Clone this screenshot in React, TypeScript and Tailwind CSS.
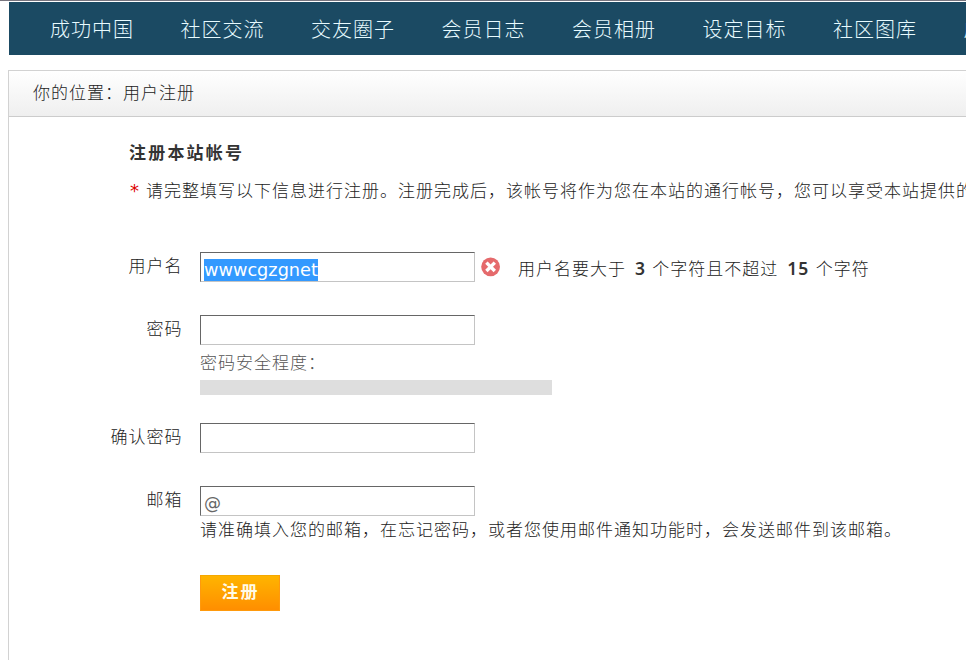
import type { ReactNode } from "react";

const NAV_ITEMS = [
  "成功中国",
  "社区交流",
  "交友圈子",
  "会员日志",
  "会员相册",
  "设定目标",
  "社区图库",
  "成功商城",
];

export default function App() {
  return (
    <div className="h-[660px] w-[966px] overflow-hidden border-t border-[#78757f] bg-white pt-px font-['DejaVu_Sans','Noto_Sans_CJK_SC',sans-serif] text-[17px] font-light tracking-[1px] text-[#222]">
      <NavBar />
      <main className="ml-2 mt-[15px] h-[620px] border-l border-t border-[#d2d2d2]">
        <div className="h-[46px] border-b border-[#ccc] bg-linear-to-b from-white to-[#efefef] pl-6 leading-[44px]">
          你的位置：用户注册
        </div>
        <RegisterForm />
      </main>
    </div>
  );
}

function NavBar() {
  return (
    <nav className="ml-[9px] flex h-[53px] gap-[46.5px] bg-[#1b4a63] pl-[41px] text-[20px] leading-[57px] text-[#e8fbff]">
      {NAV_ITEMS.map((item) => (
        <a key={item} href="#" className="shrink-0 whitespace-nowrap">
          {item}
        </a>
      ))}
    </nav>
  );
}

function RegisterForm() {
  return (
    <form className="pt-[22px]">
      <h1 className="pl-[120px] font-bold leading-[28px] tracking-[2.2px] text-[#333]">注册本站帐号</h1>
      <p className="mt-[10px] flex gap-[6px] whitespace-nowrap pl-[121px] leading-[28px]">
        <span className="w-[11px] text-[18px] font-normal text-[#d00]">*</span>
        请完整填写以下信息进行注册。注册完成后，该帐号将作为您在本站的通行帐号，您可以享受本站提供的
      </p>

      <div className="mt-[47px] flex flex-col">
        <Field label="用户名" className="h-[63px]">
          <div className="flex h-[30px] items-center">
            <TextBox>
              <span className="bg-[#3399ff] text-[17.7px] font-normal leading-[22px] tracking-normal text-white">
                wwwcgzgnet
              </span>
            </TextBox>
            <ErrorIcon />
            <span className="ml-[17px] whitespace-pre pt-[6px]">
              用户名要大于 <Digits>3</Digits> 个字符且不超过 <Digits>15</Digits> 个字符
            </span>
          </div>
        </Field>
        <Field label="密码" className="h-[108px]">
          <TextBox />
          <p className="mt-[4px] leading-[28px] text-[#555]">密码安全程度：</p>
          <div className="mt-[3px] h-[15px] w-[352px] bg-[#dedede]" />
        </Field>
        <Field label="确认密码" className="h-[63px]">
          <TextBox />
        </Field>
        <Field label="邮箱" className="h-[89px]">
          <TextBox>
            <span className="text-[17px] font-normal leading-[24px] text-[#666]">@</span>
          </TextBox>
          <p className="whitespace-nowrap leading-[28px]">
            请准确填入您的邮箱，在忘记密码，或者您使用邮件通知功能时，会发送邮件到该邮箱。
          </p>
        </Field>
        <button
          type="button"
          className="ml-[191px] h-9 w-20 border border-[#ff9a0c] border-t-[#f5a800] bg-linear-to-b from-[#ffb400] to-[#ff8e00] pb-[5px] pl-[1px] font-['Noto_Sans_CJK_SC',sans-serif] font-bold leading-[28px] tracking-[2px] text-[#fffbe8]"
        >
          注册
        </button>
      </div>
    </form>
  );
}

function Digits({ children }: { children: ReactNode }) {
  return (
    <b className="ml-[2.5px] font-['Noto_Sans',sans-serif] text-[17.5px] font-semibold leading-none tracking-[1px] text-[#333]">
      {children}
    </b>
  );
}

function Field({
  label,
  className,
  children,
}: {
  label: string;
  className: string;
  children: ReactNode;
}) {
  return (
    <div className={`flex ${className}`}>
      <label className="mr-[17.5px] w-[173.5px] shrink-0 text-right leading-[28px]">{label}</label>
      <div>{children}</div>
    </div>
  );
}

function TextBox({ children }: { children?: ReactNode }) {
  return (
    <div className="flex h-[30px] w-[275px] items-end border border-b-[#c4c4c4] border-l-[#666] border-r-[#c4c4c4] border-t-[#666] bg-white pl-[3px]">
      {children}
    </div>
  );
}

function ErrorIcon() {
  return (
    <svg className="ml-[6px] size-5" viewBox="0 0 20 20" fill="none">
      <circle cx="9.6" cy="9.8" r="9.4" fill="#e56a6c" />
      <path d="M5.4 5.6l8.4 8.4M13.8 5.6l-8.4 8.4" stroke="#fff" strokeWidth="3.4" />
    </svg>
  );
}
